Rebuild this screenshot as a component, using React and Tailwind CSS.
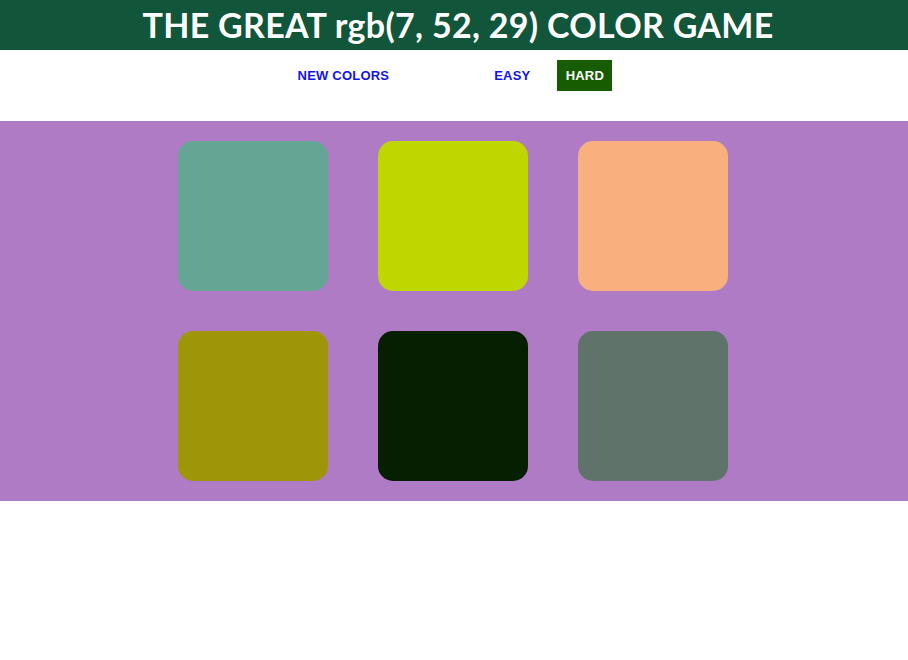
export default function App() {
  const colors = ["#65a594", "#c0d600", "#fab07e", "#9e9608", "#061f00", "#60736a"];
  return (
    <div className="min-h-[660px] bg-white" style={{ fontFamily: "Lato, 'Noto Sans', sans-serif" }}>
      <h1 className="h-[50px] bg-[#11553a] text-white font-bold text-[34px] leading-[50px] text-center tracking-[0.3px] pl-[8px]">
        THE GREAT rgb(7, 52, 29) COLOR GAME
      </h1>
      <div className="h-[71px] flex justify-center items-start pt-[10px]" style={{ fontFamily: "'Liberation Sans', Arial, sans-serif" }}>
        <div className="flex items-center h-[31px] text-[13px] font-bold">
          <span className="text-[#1414e6] tracking-[0.2px] ml-[2px]">NEW COLORS</span>
          <span className="text-[#1414e6] tracking-[0.2px] ml-[105px]">EASY</span>
          <span className="bg-[#175c00] text-white tracking-[0.2px] h-[31px] w-[55px] flex items-center justify-center ml-[27px]">HARD</span>
        </div>
      </div>
      <div className="bg-[#b07bc5] py-[20px] flex justify-center pr-[2px]">
        <div className="grid grid-cols-3 gap-x-[50px] gap-y-[40px]">
          {colors.map((c, i) => (
            <div key={i} className="w-[150px] h-[150px] rounded-[15px]" style={{ backgroundColor: c }} />
          ))}
        </div>
      </div>
    </div>
  );
}
